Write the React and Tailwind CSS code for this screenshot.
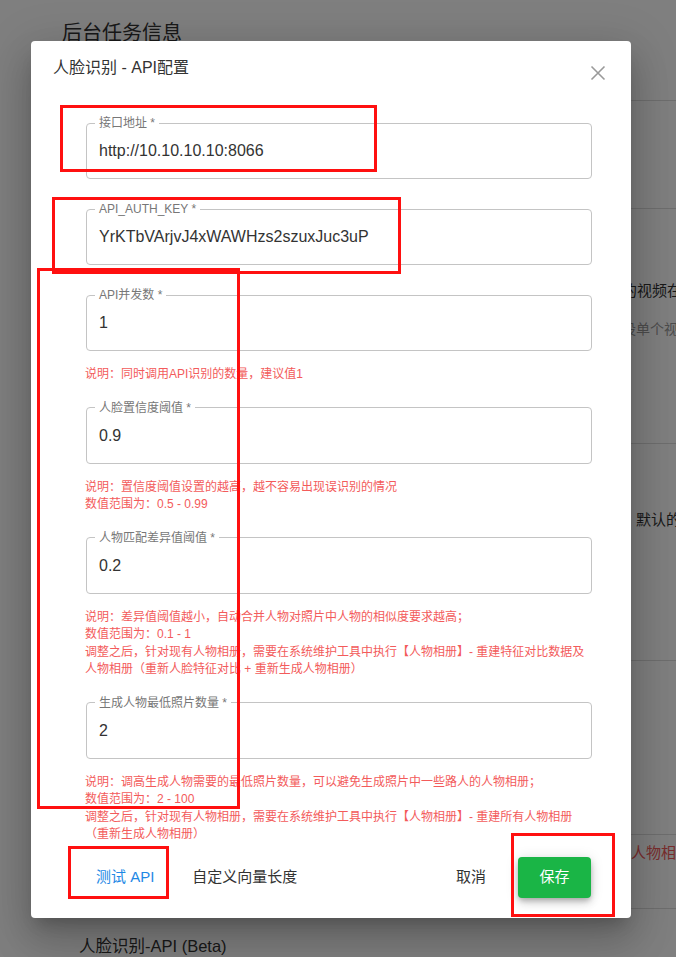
import React from "react";

const fields = [
  { label: "接口地址 *", value: "http://10.10.10.10:8066", help: [] },
  { label: "API_AUTH_KEY *", value: "YrKTbVArjvJ4xWAWHzs2szuxJuc3uP", help: [] },
  { label: "API并发数 *", value: "1", help: ["说明：同时调用API识别的数量，建议值1"] },
  {
    label: "人脸置信度阈值 *",
    value: "0.9",
    help: ["说明：置信度阈值设置的越高，越不容易出现误识别的情况", "数值范围为：0.5 - 0.99"],
  },
  {
    label: "人物匹配差异值阈值 *",
    value: "0.2",
    help: [
      "说明：差异值阈值越小，自动合并人物对照片中人物的相似度要求越高；",
      "数值范围为：0.1 - 1",
      "调整之后，针对现有人物相册，需要在系统维护工具中执行【人物相册】- 重建特征对比数据及",
      "人物相册（重新人脸特征对比 + 重新生成人物相册）",
    ],
  },
  {
    label: "生成人物最低照片数量 *",
    value: "2",
    help: [
      "说明：调高生成人物需要的最低照片数量，可以避免生成照片中一些路人的人物相册；",
      "数值范围为：2 - 100",
      "调整之后，针对现有人物相册，需要在系统维护工具中执行【人物相册】- 重建所有人物相册",
      "（重新生成人物相册）",
    ],
  },
];

function Field({ f, last }) {
  const hasHelp = f.help.length > 0;
  return (
    <div className={hasHelp ? (last ? "" : "mb-[17px]") : "mb-[23px]"}>
      <fieldset className="border border-[#c4c4c4] rounded-[4px] px-[8px] min-w-0">
        <legend className="px-[4px] text-[12px] leading-[14px] text-[#777]">{f.label}</legend>
        <div className="h-[48px] pt-[11px] pl-[4px] text-[16px] leading-[20px] text-[#333] whitespace-nowrap">
          {f.value}
        </div>
      </fieldset>
      {hasHelp && (
        <div className="mt-[15px] -ml-[1px] text-[12px] leading-[17.5px] text-[#f35b5b]">
          {f.help.map((h, i) => (
            <div key={i} className="whitespace-nowrap">{h}</div>
          ))}
        </div>
      )}
    </div>
  );
}

export default function App() {
  return (
    <div className="relative w-[676px] h-[957px] overflow-hidden bg-white font-['Liberation_Sans','Noto_Sans_CJK_SC',sans-serif]">
      {/* background page */}
      <div className="pl-[62px]">
        <div className="h-[101px] border-b border-[#ddd] pt-[19px]">
          <div className="text-[20px] leading-[28px] text-[#333]">后台任务信息</div>
        </div>
        <div className="h-[108px] border-b border-[#ddd]" />
        <div className="h-[235px] border-b border-[#ddd] pt-[72px]">
          <div className="ml-[530px] text-[15px] leading-[20px] text-[#333] whitespace-nowrap">上传的视频在后台</div>
          <div className="mt-[18px] ml-[546px] text-[14px] leading-[20px] text-[#999] whitespace-nowrap">或设单个视频</div>
        </div>
        <div className="h-[217px] border-b border-[#ddd] pt-[66px]">
          <div className="ml-[574px] text-[15px] leading-[20px] text-[#333] whitespace-nowrap">默认的设置</div>
        </div>
        <div className="h-[174px] border-b border-[#ddd]" />
        <div className="h-[74px] border-b border-[#ddd] pt-[8px]">
          <div className="ml-[569px] text-[15px] leading-[20px] text-[#f35b5b] whitespace-nowrap">人物相册</div>
        </div>
        <div className="pl-[17px] pt-[25px] text-[16.5px] leading-[24px] text-[#333]">人脸识别-API (Beta)</div>
      </div>

      {/* overlay */}
      <div className="absolute inset-0 bg-black/50" />

      {/* dialog */}
      <div className="absolute left-[31px] top-[41px] w-[600px] bg-white rounded-[4px] shadow-[0_11px_15px_-7px_rgba(0,0,0,0.2),0_24px_38px_3px_rgba(0,0,0,0.14),0_9px_46px_8px_rgba(0,0,0,0.12)]">
        <div className="flex items-start justify-between pl-[22px] pr-[25px] pt-[15px]">
          <div className="text-[16px] leading-[24px] text-[#333]">人脸识别 - API配置</div>
          <svg width="16" height="16" viewBox="0 0 16 16" className="mt-[9px]">
            <path d="M1.5 1.5 L14.5 14.5 M14.5 1.5 L1.5 14.5" stroke="#9a9a9a" strokeWidth="1.6" fill="none" />
          </svg>
        </div>
        <div className="pl-[55px] pr-[39px] mt-[35px]">
          {fields.map((f, i) => (
            <Field key={i} f={f} last={i === fields.length - 1} />
          ))}
        </div>
        <div className="flex items-center mt-[13px] mb-[20px] pl-[65px] pr-[40px] text-[15px]">
          <span className="text-[#1e88e5]">测试 API</span>
          <span className="ml-[38px] text-[#333]">自定义向量长度</span>
          <span className="ml-auto text-[#333]">取消</span>
          <button className="ml-[32px] w-[73px] h-[41px] rounded-[4px] bg-[#1ab546] text-white text-[15px] shadow-[0_3px_5px_-1px_rgba(0,0,0,0.2),0_5px_8px_0_rgba(0,0,0,0.14),0_1px_14px_0_rgba(0,0,0,0.12)]">
            保存
          </button>
        </div>
      </div>

      {/* annotation boxes */}
      <div className="absolute left-[60px] top-[105px] w-[317px] h-[67px] border-[3px] border-[#ff1010]" />
      <div className="absolute left-[52px] top-[197px] w-[349px] h-[77px] border-[3px] border-[#ff1010]" />
      <div className="absolute left-[37px] top-[268px] w-[203px] h-[541px] border-[3px] border-[#ff1010]" />
      <div className="absolute left-[68px] top-[846px] w-[101px] h-[53px] border-[3px] border-[#ff1010]" />
      <div className="absolute left-[511px] top-[833px] w-[104px] h-[84px] border-[3px] border-[#ff1010]" />
    </div>
  );
}
